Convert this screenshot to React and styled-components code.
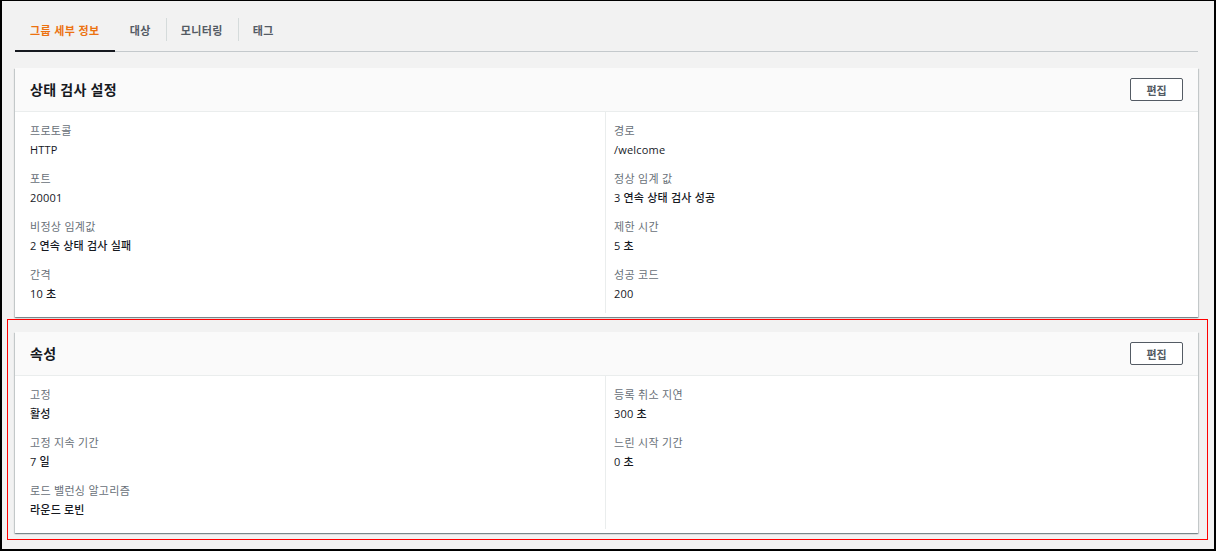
import React from "react";
import styled, { createGlobalStyle } from "styled-components";

const GlobalStyle = createGlobalStyle`
  html, body {
    margin: 0;
    padding: 0;
    background: #ffffff;
  }
  body {
    font-family: "Open Sans", "Noto Sans CJK KR", sans-serif;
    color: #16191f;
  }
  * {
    box-sizing: border-box;
  }
`;

const Frame = styled.div`
  width: 1216px;
  height: 551px;
  border: 2px solid #000;
  border-top-width: 1px;
  background: #f2f2f2;
  padding: 14px 16px 0 13px;
  overflow: hidden;
`;

const TabBar = styled.div`
  display: flex;
  align-items: center;
  height: 37px;
  border-bottom: 1px solid #c4c9cc;
`;

const Tab = styled.div`
  position: relative;
  height: 100%;
  display: flex;
  align-items: center;
  padding: 0 15px 6px;
  font-size: 11px;
  font-weight: 700;
  letter-spacing: 0.4px;
  color: ${(p) => (p.$active ? "#ec7211" : "#545b64")};

  & + &::before {
    content: "";
    position: absolute;
    left: 0;
    top: 3px;
    height: 23px;
    border-left: 1px solid #d5dbdb;
  }

  &::after {
    content: "";
    display: ${(p) => (p.$active ? "block" : "none")};
    position: absolute;
    left: 0;
    right: 0;
    bottom: -1px;
    height: 2px;
    background: #16191f;
  }
`;

const Panel = styled.section`
  background: #fff;
  box-shadow: 0 1px 1px 0 rgba(0, 28, 36, 0.3),
    1px 1px 1px 0 rgba(0, 28, 36, 0.15), -1px 1px 1px 0 rgba(0, 28, 36, 0.15);
  margin-top: ${(p) => p.$top || 0}px;
`;

const PanelHeader = styled.div`
  display: flex;
  align-items: center;
  justify-content: space-between;
  height: 44px;
  padding: 0 15px;
  background: #fafafa;
  border-bottom: 1px solid #eaeded;
`;

const Title = styled.h2`
  margin: 0 0 2px;
  font-size: 14px;
  font-weight: 700;
  letter-spacing: 0.3px;
  color: #16191f;
`;

const EditButton = styled.button`
  width: 53px;
  height: 23px;
  padding: 0;
  border: 1px solid #545b64;
  border-radius: 2px;
  background: #fff;
  font-family: inherit;
  font-size: 11px;
  font-weight: 700;
  color: #545b64;
`;

const PanelBody = styled.div`
  display: grid;
  grid-template-columns: 590px 1fr;
  padding-bottom: 4px;
`;

const Column = styled.div`
  padding: 9px 15px 0;
  ${(p) =>
    p.$right &&
    `
    border-left: 1px solid #eaeded;
    padding-left: 8px;
  `}
`;

const Field = styled.div`
  margin-bottom: 10px;
`;

const Label = styled.div`
  font-size: 11px;
  line-height: 19px;
  color: #687078;
  letter-spacing: 0.3px;
`;

const Value = styled.div`
  font-size: 11px;
  line-height: 19px;
  font-weight: 500;
  color: #16191f;
  letter-spacing: 0.2px;
`;

const Highlight = styled.div`
  margin: 2px -10px 0 -8px;
  padding: 12px 9px 6px 7px;
  border: 1px solid #ff0000;
`;

const healthLeft = [
  ["프로토콜", "HTTP"],
  ["포트", "20001"],
  ["비정상 임계값", "2 연속 상태 검사 실패"],
  ["간격", "10 초"],
];

const healthRight = [
  ["경로", "/welcome"],
  ["정상 임계 값", "3 연속 상태 검사 성공"],
  ["제한 시간", "5 초"],
  ["성공 코드", "200"],
];

const attrLeft = [
  ["고정", "활성"],
  ["고정 지속 기간", "7 일"],
  ["로드 밸런싱 알고리즘", "라운드 로빈"],
];

const attrRight = [
  ["등록 취소 지연", "300 초"],
  ["느린 시작 기간", "0 초"],
];

const Fields = ({ items }) =>
  items.map(([label, value]) => (
    <Field key={label}>
      <Label>{label}</Label>
      <Value>{value}</Value>
    </Field>
  ));

const DetailPanel = ({ title, left, right, top }) => (
  <Panel $top={top}>
    <PanelHeader>
      <Title>{title}</Title>
      <EditButton type="button">편집</EditButton>
    </PanelHeader>
    <PanelBody>
      <Column>
        <Fields items={left} />
      </Column>
      <Column $right>
        <Fields items={right} />
      </Column>
    </PanelBody>
  </Panel>
);

export default function App() {
  return (
    <>
      <GlobalStyle />
      <Frame>
        <TabBar>
          <Tab $active>그룹 세부 정보</Tab>
          <Tab>대상</Tab>
          <Tab>모니터링</Tab>
          <Tab>태그</Tab>
        </TabBar>
        <DetailPanel
          top={16}
          title="상태 검사 설정"
          left={healthLeft}
          right={healthRight}
        />
        <Highlight>
          <DetailPanel title="속성" left={attrLeft} right={attrRight} />
        </Highlight>
      </Frame>
    </>
  );
}
